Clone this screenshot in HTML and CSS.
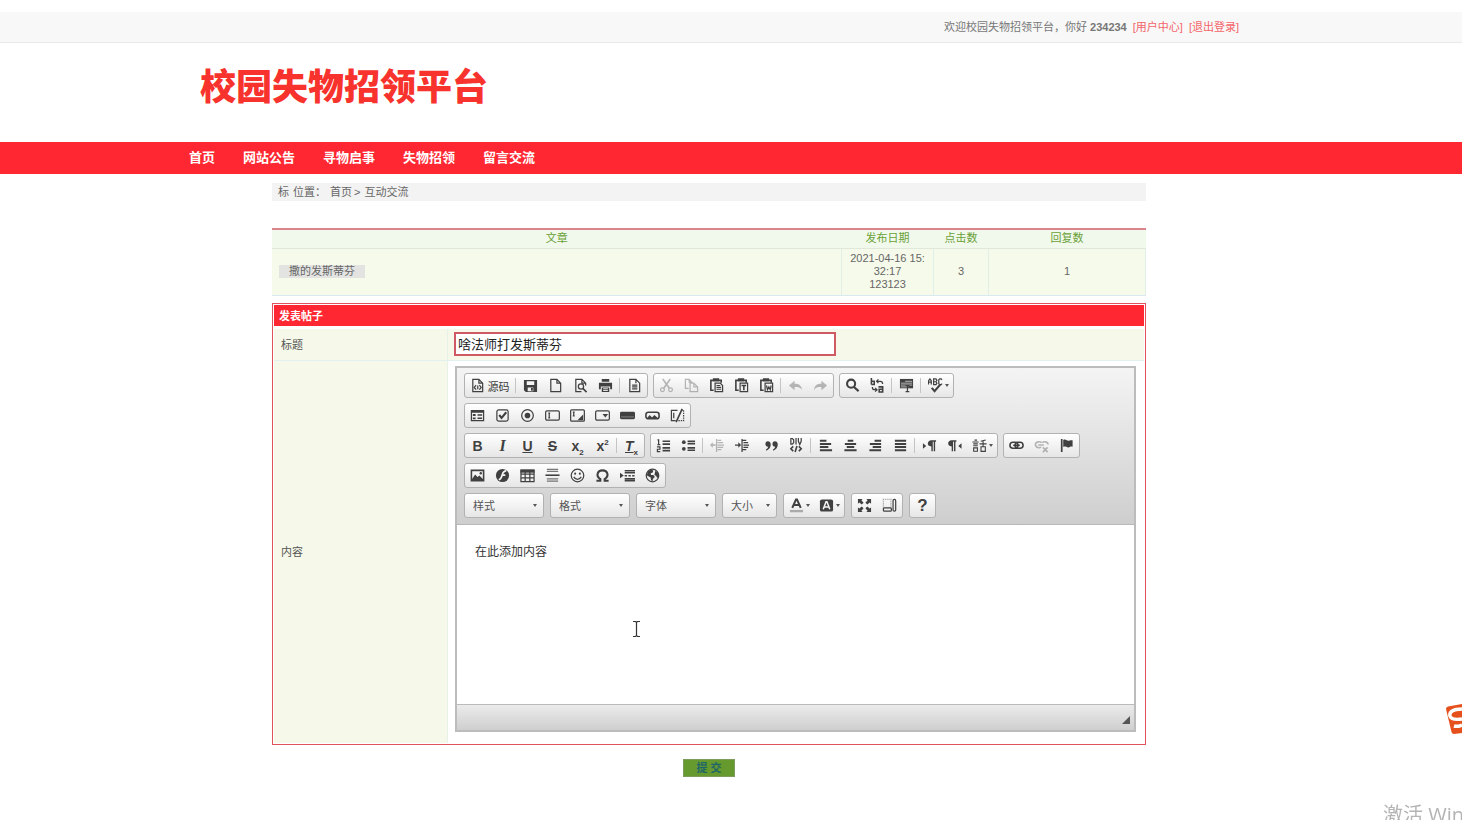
FILE: index.html
```html
<!DOCTYPE html>
<html lang="zh-CN">
<head>
<meta charset="utf-8">
<title>校园失物招领平台</title>
<link rel="stylesheet" href="styles.css">
</head>
<body>
<svg class="sprite" aria-hidden="true">
  <symbol id="i-source" viewBox="0 0 16 16"><path class="l" d="M3 1.500h6.500l4 4v9H3zM9.500 1.500v4h4"/><path class="l" d="M6.500 7.500l-2 2.500 2 2.500M10 7.500l2 2.500-2 2.500M8.300 8v4"/></symbol>
  <symbol id="i-save" viewBox="0 0 16 16"><path class="f" d="M1 2h14v13H3l-2-2zM4 3.500v4h8v-4zM5 10v4h6v-4z" fill-rule="evenodd"/><path class="f" d="M8.500 10.500h2v3h-2z"/></symbol>
  <symbol id="i-new" viewBox="0 0 16 16"><path class="l" d="M3 1.500h6.500l4 4v9H3zM9.500 1.500v4h4"/></symbol>
  <symbol id="i-preview" viewBox="0 0 16 16"><path class="l" d="M13.500 8V5.500l-4-4H3v13h6M9.500 1.500v4h4"/><circle class="l" cx="8.500" cy="9" r="2.800"/><path class="b" d="M10.500 11l4 4"/></symbol>
  <symbol id="i-print" viewBox="0 0 16 16"><path class="f" d="M4 1h8v3H4zM1 5h14v7h-2V9H3v3H1zM4 10h8v5H4z"/><path d="M5.500 11.500h5M5.500 13.300h5" stroke="#eee"/></symbol>
  <symbol id="i-template" viewBox="0 0 16 16"><path class="l" d="M3 1.500h6.500l4 4v9H3zM9.500 1.500v4"/><path class="l" d="M5.500 7.500h5.500M5.500 9.500h5.500M5.500 11.500h5.500"/></symbol>
  <symbol id="i-cut" viewBox="0 0 16 16"><path class="b" d="M4 1l7 10M12 1L5 11"/><circle class="l" cx="3.700" cy="12.500" r="2"/><circle class="l" cx="12.300" cy="12.500" r="2"/></symbol>
  <symbol id="i-copy" viewBox="0 0 16 16"><path class="l" d="M5 11H1.500V1.500h4l3 3V5M5.500 1.500v3h3M6.500 5.500h4l4 4v5h-8zM10.500 5.500v4h4"/></symbol>
  <symbol id="i-paste" viewBox="0 0 16 16"><path class="b" d="M5 13H2V2.500h11V5M5 3V1h5v2z"/><path class="l" d="M6.500 5.500h5.500l2.500 2.500v6.500h-8z"/><path class="l" d="M8 8h4M8 10h5M8 12h5"/></symbol>
  <symbol id="i-pastetext" viewBox="0 0 16 16"><path class="b" d="M5 13H2V2.500h11V5M5 3V1h5v2z"/><path class="l" d="M6.500 5.500h8v9h-8z"/><path class="b" d="M8 8h5M10.500 8v5"/></symbol>
  <symbol id="i-pasteword" viewBox="0 0 16 16"><path class="b" d="M5 13H2V2.500h11V5M5 3V1h5v2z"/><path class="l" d="M6.500 5.500h8v9h-8z"/><path class="l" d="M8 8l1 4.500 1.500-3 1.500 3L13 8"/></symbol>
  <symbol id="i-undo" viewBox="0 0 16 16"><path class="f" d="M1 8l6-5v3c5 0 7.500 2 8 7-1.500-3-4-3.500-8-3.500V13z"/></symbol>
  <symbol id="i-redo" viewBox="0 0 16 16"><path class="f" d="M15 8L9 3v3c-5 0-7.500 2-8 7 1.500-3 4-3.500 8-3.500V13z"/></symbol>
  <symbol id="i-find" viewBox="0 0 16 16"><circle cx="6.500" cy="6" r="4.300" class="h"/><path d="M9.500 9.500l5 4.500" class="h"/></symbol>
  <symbol id="i-replace" viewBox="0 0 16 16"><path class="b" d="M1.500 0v7M1.500 3.500h3V7h-3M9 9.500h4.500V15H9.800v-3h3.500"/><path class="l" d="M7 3.500h4c2 0 2.500 1 2.500 3M9 1.500l-2 2 2 2M7 12.500H5c-2 0-2.500-1-2.500-3M5.500 10.500l2 2-2 2"/></symbol>
  <symbol id="i-selectall" viewBox="0 0 16 16"><path class="f" d="M1 1h14v10H1z"/><path d="M6.500 3.500H14M2 5.500h12M2 7.500h12M2 9.500h8" stroke="#bbb"/><path class="l" d="M9 8v6.500M7 14.500h4M7 8h4"/></symbol>
  <symbol id="i-spell" viewBox="0 0 16 16"><path class="l" d="M.5 7V3l1.500-2L3.500 3v4M.5 4.500h3M6 1v6h2.500l1-1.500L8.500 4H6h2.500l1-1.500L8.500 1zM15 2l-1-1h-1.500L11.500 2v4l1 1h1.500l1-1"/><path class="h" d="M4 10.500l3 3.500 6-7"/></symbol>
  <symbol id="i-form" viewBox="0 0 16 16"><path class="l" d="M1.500 3h13v10.500h-13z"/><path class="f" d="M1 2h14v3H1zM3 6.500h3v2H3zM3 10h3v2H3z"/><path class="b" d="M8 7.500h5M8 11h5"/></symbol>
  <symbol id="i-check" viewBox="0 0 16 16"><rect class="l" x="2" y="2" width="12" height="12" rx="2"/><path class="h" d="M4.500 7.500L7 10.500 12 4.500"/></symbol>
  <symbol id="i-radio" viewBox="0 0 16 16"><circle class="l" cx="8" cy="8" r="6.200"/><circle class="f" cx="8" cy="8" r="3"/></symbol>
  <symbol id="i-field" viewBox="0 0 16 16"><rect class="l" x=".7" y="3" width="14.600" height="10" rx="1.500"/><path class="l" d="M3.500 5.500h2M4.500 5.500v5M3.500 10.500h2"/></symbol>
  <symbol id="i-area" viewBox="0 0 16 16"><rect class="l" x=".7" y="2" width="14.600" height="12" rx="1"/><path class="l" d="M3 4.500h2M4 4.500v4M3 8.500h2"/><path class="f" d="M14 7v6H8z"/></symbol>
  <symbol id="i-select" viewBox="0 0 16 16"><rect class="l" x=".7" y="3" width="14.600" height="10" rx="1.500"/><path class="f" d="M8 6.500h6L11 10z"/></symbol>
  <symbol id="i-button" viewBox="0 0 16 16"><rect class="f" x="0" y="4" width="16" height="8" rx="1.500"/><path d="M1 9.500h14" stroke="#888"/></symbol>
  <symbol id="i-imgbutton" viewBox="0 0 16 16"><rect class="b" x="1" y="4.500" width="14" height="7" rx="2.500"/><path class="f" d="M2 11l3-3.500 2.500 2.500L10 7.500l4 3.500z"/></symbol>
  <symbol id="i-hidden" viewBox="0 0 16 16"><path class="l" d="M8 2.500H1.500v11H6M4 5v6"/><path class="l" stroke-dasharray="1.500 1" d="M12 2.500h2.500v11H8"/><path class="b" d="M13 1L6.500 15"/></symbol>
  <symbol id="i-ol" viewBox="0 0 16 16"><path class="l" d="M1.500 2h1.300v5M1.500 7h3M1 9.500h3.200V12H1.500v2.500h3"/><path class="b" d="M7 3.500h8M7 6.500h8M7 10.500h8M7 13.500h8"/></symbol>
  <symbol id="i-ul" viewBox="0 0 16 16"><circle class="f" cx="3" cy="4.500" r="2"/><circle class="f" cx="3" cy="11.500" r="2"/><path class="b" d="M7 3.500h8M7 6h8M7 10.500h8M7 13h8"/></symbol>
  <symbol id="i-outdent" viewBox="0 0 16 16"><path class="l" d="M8 2.500h4M8 5h6M8 7.500h7M8 10h6M8 12.500h4M7 1v14"/><path class="b" d="M1 7.500h5"/><path class="f" d="M0 7.500l3-3v6z"/></symbol>
  <symbol id="i-indent" viewBox="0 0 16 16"><path class="l" d="M8 2.500h4M9 5h5M9 7.500h6M9 10h5M8 12.500h4M7.500 1v14M0 7.500h5"/><path class="f" d="M6.500 7.500l-3-3v6z"/></symbol>
  <symbol id="i-quote" viewBox="0 0 16 16"><path class="f" d="M4 3.500c2 0 3.200 1.300 3.200 3.500 0 3-1.700 5.300-4.700 6.500l-.5-1.200c1.500-.8 2.300-1.800 2.400-3C2.500 9.300 1.500 8 1.500 6.300 1.500 4.600 2.600 3.500 4 3.500zM11.500 3.500c2 0 3.200 1.300 3.200 3.500 0 3-1.700 5.300-4.700 6.500l-.5-1.200c1.500-.8 2.300-1.800 2.400-3-1.900 0-2.900-1.300-2.900-3 0-1.700 1.100-2.800 2.500-2.800z"/></symbol>
  <symbol id="i-div" viewBox="0 0 16 16"><path class="l" d="M2 .5v6h1.500L5 5V2L3.500.5zM7.500 0v7M10 0v3.500L11.500 7 13 3.500V0"/><path class="b" d="M4.500 9L2 11.500 4.500 14M10.500 9l2.500 2.500-2.500 2.500M8.500 8.500l-2 6.500"/></symbol>
  <symbol id="i-left" viewBox="0 0 16 16"><path class="h" d="M2 3h7M2 6.300h12M2 9.600h9M2 13h13"/></symbol>
  <symbol id="i-center" viewBox="0 0 16 16"><path class="h" d="M5 3h6M2 6.300h12M4 9.600h8M1.500 13h13"/></symbol>
  <symbol id="i-right" viewBox="0 0 16 16"><path class="h" d="M7 3h7M2 6.300h12M5 9.600h9M1.500 13h12.500"/></symbol>
  <symbol id="i-justify" viewBox="0 0 16 16"><path class="h" d="M2 3h12M2 6.300h12M2 9.600h12M2 13h12"/></symbol>
  <symbol id="i-ltr" viewBox="0 0 16 16"><path class="f" d="M1 5.500L4.500 8.500 1 11.500zM15 2.500v1.500h-1V14h-1.500V4h-1v10H10V9C4.500 9 5.500 2.500 10 2.500z"/></symbol>
  <symbol id="i-rtl" viewBox="0 0 16 16"><path class="f" d="M15.500 5.500L12 8.500l3.500 3zM10 2.500v1.500H9V14H7.500V4h-1v10H5V9C-.5 9 .5 2.500 5 2.500z"/></symbol>
  <symbol id="i-lang" viewBox="0 0 18 16"><path class="l" d="M3 1.500h3M.5 3.700h7.500M1.500 6h5.500M1.500 8.300h5.500M2 10.800h4.500v4H2zM16.500 1.500l-6 1.500M13.300 2.500V9M9 6h8.500M10.800 9.500h5.200V15h-5.200z"/></symbol>
  <symbol id="i-link" viewBox="0 0 16 16"><rect class="b" x="1" y="4.500" width="8.500" height="6.500" rx="3.200"/><rect class="b" x="6.500" y="4.500" width="8.500" height="6.500" rx="3.200"/><path class="b" d="M4.500 7.800h7"/></symbol>
  <symbol id="i-unlink" viewBox="0 0 16 16"><path class="b" d="M8 5c-1-1.500-6.500-1.500-6.500 2s5 4 6 2.500M4.500 7.500h6M9 5c1-1.500 6-1.500 6 2M9.500 10l5 5M14.500 10l-5 5"/></symbol>
  <symbol id="i-flag" viewBox="0 0 16 16"><path class="f" d="M2 1h1.800v14H2zM4.500 2c3-1.500 4 1.500 6 .8 1.500-.5 2.500-.5 4-.5v7c-3-.5-3 1-5 .7-2-.4-3-1.500-5-.5z"/></symbol>
  <symbol id="i-image" viewBox="0 0 16 16"><path class="b" d="M1.500 2.500h13v11h-13z"/><path class="f" d="M2 12l3.500-5L8 9.500l2-1.500 4 4v1H2z"/><circle class="f" cx="11.500" cy="5.500" r="1.300"/></symbol>
  <symbol id="i-flash" viewBox="0 0 16 16"><circle class="f" cx="8" cy="8" r="7"/><path d="M12 3C8.500 3 8 6 7.500 8S6 12 4 12.500M7 7.500h4" stroke="#f4f4f4" stroke-width="1.800" fill="none"/></symbol>
  <symbol id="i-table" viewBox="0 0 16 16"><path class="l" d="M1 2.500h14v12H1zM1 6.500h14M1 10.500h14M5.500 4v10M10.500 4v10"/><path class="f" d="M.5 1.500h15v3.500H.5z"/></symbol>
  <symbol id="i-hr" viewBox="0 0 16 16"><path class="l" opacity=".7" d="M2 1.500h12M2 3.700h12M2 11.500h12M2 14h12"/><path class="b" d="M.5 7.700h15"/></symbol>
  <symbol id="i-smile" viewBox="0 0 16 16"><circle class="l" cx="8" cy="8" r="6.700"/><circle class="f" cx="5.500" cy="6" r="1.100"/><circle class="f" cx="10.500" cy="6" r="1.100"/><path class="l" d="M4 9.500c2 3.500 6 3.500 8 0"/></symbol>
  <symbol id="i-omega" viewBox="0 0 16 16"><path class="h" d="M1.500 13.500h4.200v-1.700C.5 8.500 2.500 2.500 8 2.500s7.500 6 2.300 9.300v1.700h4.200"/></symbol>
  <symbol id="i-break" viewBox="0 0 16 16"><path class="f" d="M0 5l4 3-4 3z"/><path class="b" d="M5 3h11M5 5h11M5 11.500h11M5 13.500h11"/><path class="b" stroke-dasharray="2.500 1.500" d="M5 8.300h11"/></symbol>
  <symbol id="i-globe" viewBox="0 0 16 16"><circle class="l" cx="8" cy="8" r="6.700"/><path class="f" d="M3 3.500L7 1.500l2 1.500-1 2-2 .5.500 2H9l1.500 2-2 2-.5 2.500-1.500-1-.5-3L2 8zM11 3l2.500 1.500L15 8l-2 3-1-2.500-2-1z"/></symbol>
  <symbol id="i-color" viewBox="0 0 16 16"><path class="h" d="M3.500 10.500L7.500 1.500h1l4 9M5 7.500h6"/><path d="M1 14h14" stroke="#aaa" stroke-width="2.500"/></symbol>
  <symbol id="i-bgcolor" viewBox="0 0 16 16"><rect class="f" x="1" y="1.500" width="14" height="13" rx="2"/><path d="M4.500 12L7.500 4h1l3 8M6 9.500h4" stroke="#f4f4f4" stroke-width="1.600" fill="none"/></symbol>
  <symbol id="i-max" viewBox="0 0 16 16"><path class="f" d="M1 1h5L4.700 2.500 7 5 5 7 2.500 4.700 1 6zM15 1h-5l1.300 1.500L9 5l2 2 2.500-2.300L15 6zM1 15h5l-1.300-1.500L7 11 5 9l-2.500 2.300L1 10zM15 15h-5l1.300-1.500L9 11l2-2 2.500 2.300L15 10z"/></symbol>
  <symbol id="i-blocks" viewBox="0 0 16 16"><path class="l" opacity=".5" stroke-dasharray="1 1" d="M1.500 10V1.500h8V10"/><rect class="l" x="1.500" y="10.500" width="8.500" height="3.500" rx="1"/><rect class="l" x="11.800" y="1.500" width="2.800" height="12.500" rx="1.300"/></symbol>
</svg>

<div class="topbar">
  <div class="wrap topbar-in">
    <span>欢迎校园失物招领平台，你好 <b>234234</b></span>
    <a href="#">[用户中心]</a>
    <a href="#">[退出登录]</a>
  </div>
</div>
<header class="wrap brand"><h1>校园失物招领平台</h1></header>
<nav class="nav">
  <div class="wrap nav-in">
    <a href="#">首页</a><a href="#">网站公告</a><a href="#">寻物启事</a><a href="#">失物招领</a><a href="#">留言交流</a>
  </div>
</nav>
<div class="wrap">
<main class="main">
  <div class="crumbs"><span>标</span><span>位置：</span><a href="#">首页</a><span>&gt;</span><a class="here" href="#">互动交流</a></div>

  <table class="posts">
    <colgroup><col><col class="c-date"><col class="c-hits"><col class="c-replies"></colgroup>
    <thead><tr><th>文章</th><th>发布日期</th><th>点击数</th><th>回复数</th></tr></thead>
    <tbody><tr><td class="topic"><a href="#">撒的发斯蒂芬</a></td><td>2021-04-16 15:<br>32:17<br>123123</td><td>3</td><td>1</td></tr></tbody>
  </table>

  <form>
    <div class="post">
      <h2>发表帖子</h2>
      <div class="row">
        <label for="title">标题</label>
        <div class="cell cell-title"><input id="title" type="text" value="啥法师打发斯蒂芬"></div>
      </div>
      <div class="row">
        <label for="content">内容</label>
        <div class="cell">
          <div class="editor">
            <div class="toolbar">
              <div class="line">
                <div class="group">
                  <button type="button" class="wide"><svg><use href="#i-source"/></svg>源码</button><i></i>
                  <button type="button" aria-label="保存"><svg><use href="#i-save"/></svg></button>
                  <button type="button" aria-label="新建"><svg><use href="#i-new"/></svg></button>
                  <button type="button" aria-label="预览"><svg><use href="#i-preview"/></svg></button>
                  <button type="button" aria-label="打印"><svg><use href="#i-print"/></svg></button><i></i>
                  <button type="button" aria-label="模板"><svg><use href="#i-template"/></svg></button>
                </div>
                <div class="group">
                  <button type="button" disabled aria-label="剪切"><svg><use href="#i-cut"/></svg></button>
                  <button type="button" disabled aria-label="复制"><svg><use href="#i-copy"/></svg></button>
                  <button type="button" aria-label="粘贴"><svg><use href="#i-paste"/></svg></button>
                  <button type="button" aria-label="粘贴为文本"><svg><use href="#i-pastetext"/></svg></button>
                  <button type="button" aria-label="从 Word 粘贴"><svg><use href="#i-pasteword"/></svg></button><i></i>
                  <button type="button" disabled aria-label="撤销"><svg><use href="#i-undo"/></svg></button>
                  <button type="button" disabled aria-label="重做"><svg><use href="#i-redo"/></svg></button>
                </div>
                <div class="group">
                  <button type="button" aria-label="查找"><svg><use href="#i-find"/></svg></button>
                  <button type="button" aria-label="替换"><svg><use href="#i-replace"/></svg></button><i></i>
                  <button type="button" aria-label="全选"><svg><use href="#i-selectall"/></svg></button><i></i>
                  <button type="button" class="drop" aria-label="拼写检查"><svg><use href="#i-spell"/></svg></button>
                </div>
              </div>
              <div class="line">
                <div class="group">
                  <button type="button" aria-label="表单"><svg><use href="#i-form"/></svg></button>
                  <button type="button" aria-label="复选框"><svg><use href="#i-check"/></svg></button>
                  <button type="button" aria-label="单选按钮"><svg><use href="#i-radio"/></svg></button>
                  <button type="button" aria-label="单行文本"><svg><use href="#i-field"/></svg></button>
                  <button type="button" aria-label="多行文本"><svg><use href="#i-area"/></svg></button>
                  <button type="button" aria-label="列表"><svg><use href="#i-select"/></svg></button>
                  <button type="button" aria-label="按钮"><svg><use href="#i-button"/></svg></button>
                  <button type="button" aria-label="图像按钮"><svg><use href="#i-imgbutton"/></svg></button>
                  <button type="button" aria-label="隐藏域"><svg><use href="#i-hidden"/></svg></button>
                </div>
              </div>
              <div class="line">
                <div class="group letters">
                  <button type="button"><b>B</b></button>
                  <button type="button"><em class="serif">I</em></button>
                  <button type="button"><u>U</u></button>
                  <button type="button"><s>S</s></button>
                  <button type="button"><span>x<sub>2</sub></span></button>
                  <button type="button"><span>x<sup>2</sup></span></button><i></i>
                  <button type="button"><span><em><u>T</u></em><sub>x</sub></span></button>
                </div>
                <div class="group">
                  <button type="button" aria-label="编号列表"><svg><use href="#i-ol"/></svg></button>
                  <button type="button" aria-label="项目列表"><svg><use href="#i-ul"/></svg></button><i></i>
                  <button type="button" disabled aria-label="减少缩进"><svg><use href="#i-outdent"/></svg></button>
                  <button type="button" aria-label="增加缩进"><svg><use href="#i-indent"/></svg></button><i class="blank"></i>
                  <button type="button" aria-label="块引用"><svg><use href="#i-quote"/></svg></button>
                  <button type="button" aria-label="DIV 容器"><svg><use href="#i-div"/></svg></button><i></i>
                  <button type="button" aria-label="左对齐"><svg><use href="#i-left"/></svg></button>
                  <button type="button" aria-label="居中"><svg><use href="#i-center"/></svg></button>
                  <button type="button" aria-label="右对齐"><svg><use href="#i-right"/></svg></button>
                  <button type="button" aria-label="两端对齐"><svg><use href="#i-justify"/></svg></button><i></i>
                  <button type="button" aria-label="从左到右"><svg><use href="#i-ltr"/></svg></button>
                  <button type="button" aria-label="从右到左"><svg><use href="#i-rtl"/></svg></button>
                  <button type="button" class="drop" aria-label="语言"><svg><use href="#i-lang"/></svg></button>
                </div>
                <div class="group">
                  <button type="button" aria-label="链接"><svg><use href="#i-link"/></svg></button>
                  <button type="button" disabled aria-label="取消链接"><svg><use href="#i-unlink"/></svg></button>
                  <button type="button" aria-label="锚点"><svg><use href="#i-flag"/></svg></button>
                </div>
              </div>
              <div class="line">
                <div class="group">
                  <button type="button" aria-label="图像"><svg><use href="#i-image"/></svg></button>
                  <button type="button" aria-label="Flash"><svg><use href="#i-flash"/></svg></button>
                  <button type="button" aria-label="表格"><svg><use href="#i-table"/></svg></button>
                  <button type="button" aria-label="水平线"><svg><use href="#i-hr"/></svg></button>
                  <button type="button" aria-label="表情"><svg><use href="#i-smile"/></svg></button>
                  <button type="button" aria-label="特殊符号"><svg><use href="#i-omega"/></svg></button>
                  <button type="button" aria-label="分页符"><svg><use href="#i-break"/></svg></button>
                  <button type="button" aria-label="IFrame"><svg><use href="#i-globe"/></svg></button>
                </div>
              </div>
              <div class="line line-combos">
                <div class="group combo"><select aria-label="样式"><option>样式</option></select></div>
                <div class="group combo"><select aria-label="格式"><option>格式</option></select></div>
                <div class="group combo"><select aria-label="字体"><option>字体</option></select></div>
                <div class="group combo combo-s"><select aria-label="大小"><option>大小</option></select></div>
                <div class="group">
                  <button type="button" class="drop" aria-label="文本颜色"><svg><use href="#i-color"/></svg></button>
                  <button type="button" class="drop" aria-label="背景颜色"><svg><use href="#i-bgcolor"/></svg></button>
                </div>
                <div class="group">
                  <button type="button" aria-label="全屏"><svg><use href="#i-max"/></svg></button>
                  <button type="button" aria-label="显示区块"><svg><use href="#i-blocks"/></svg></button>
                </div>
                <div class="group letters"><button type="button" class="help"><b>?</b></button></div>
              </div>
            </div>
            <textarea id="content">在此添加内容</textarea>
            <div class="foot"><span class="grip"></span></div>
            <svg class="ibeam" viewBox="0 0 9 18" aria-hidden="true"><path d="M1 1.500h2.500l1 1 1-1H8M4.500 2v14M1 16.500h2.500l1-1 1 1H8" fill="none" stroke="#333" stroke-width="1.200"/></svg>
          </div>
        </div>
      </div>
    </div>
    <div class="actions"><button type="submit" class="submit">提 交</button></div>
  </form>
</main>
</div>

<svg class="ime" viewBox="0 0 16 30" aria-hidden="true"><path d="M0 5q0-2 2-2.500L16 0v29L8 30q-2 0-2.500-2z" fill="#e5501c"/><path d="M16 5C7 5 3 8 4 12c1 3 5 4 12 3M8 22q3 1 8-1" fill="none" stroke="#fff" stroke-width="3.500"/><path d="M11 11q1-2 5-2" fill="none" stroke="#e5501c" stroke-width="2"/></svg>
<div class="activate">激活 Windows</div>
</body>
</html>
```
FILE: styles.css
```css
* { box-sizing: border-box; }
body {
  margin: 0;
  padding-top: 12px;
  min-height: 100vh;
  overflow: hidden;
  background: #fefffe;
  color: #666;
  font: 11px/16px "Liberation Sans", "Noto Sans CJK SC", sans-serif;
}
a { color: inherit; text-decoration: none; }
button, input, select, textarea { font-family: inherit; }
.sprite { position: absolute; width: 0; height: 0; }
.wrap { max-width: 1084px; margin: 0 auto; }

.topbar { background: #f7f8f7; border-bottom: 1px solid #e9eaea; }
.topbar-in { display: flex; justify-content: flex-end; gap: 6px; padding: 7px 34px 7px 0; color: #777; }
.topbar-in a { color: #f4646a; }

.brand { padding: 19px 11px 28px; }
.brand h1 {
  margin: 0;
  font-size: 36px;
  line-height: 52px;
  font-weight: 900;
  color: #f8322c;
}

.nav { background: #ff2832; }
.nav-in { display: flex; gap: 28px; }
.nav a { color: #fff; font-size: 13px; line-height: 32px; font-weight: bold; }

.main { margin: 9px 127px 0 83px; }
.crumbs { display: flex; gap: 4px; padding: 1px 6px; background: #f3f3f3; }
.crumbs a + span { margin-left: -2px; }

.posts {
  width: 100%;
  margin-top: 27px;
  table-layout: fixed;
  border-collapse: collapse;
  border-top: 2px solid #dc848c;
}
.c-date { width: 92px; }
.c-hits { width: 55px; }
.c-replies { width: 157px; }
.posts th { padding: 0 0 2px; background: #f1f8ec; color: #6aa136; font-weight: normal; border-bottom: 1px solid #e0e8dc; }
.posts td {
  padding: 3px 0 4px;
  line-height: 13px;
  text-align: center;
  background: #f6faea;
  border-right: 1px solid #e1efe9;
  border-bottom: 1px solid #d8eaf0;
}
.posts .topic { padding-left: 7px; text-align: left; }
.topic a { display: inline-block; padding: 0 10px; background: #e3e4e2; }

.post { margin-top: 7px; padding: 1px; border: 1px solid #e0525c; background: #fff; }
.post h2 { margin: 0 0 3px; padding: 3px 5px 2px; background: #ff2832; color: #fff; font-size: 11px; line-height: 16px; }
.row { display: flex; border-bottom: 1px solid #e2f1f0; }
.row:last-child { border-bottom: 0; }
.row label { flex: 0 0 174px; display: flex; align-items: center; padding-left: 7px; background: #f6f9ea; border-right: 1px solid #e6f1e8; color: #555; }
.cell { flex: 1; min-width: 0; padding: 5px 8px 11px 7px; }
.cell-title { padding: 3px 6px 4px; background: #f6f9ea; }
.cell input { display: block; width: 382px; max-width: 100%; height: 24px; padding: 0 2px 2px; border: 2px solid #cf5a64; background: #fff; color: #222; font-size: 13px; outline: 0; }

.editor { position: relative; border: 2px solid #bcbcbc; }
.toolbar { display: grid; gap: 5px; padding: 5px 7px 6px; background: linear-gradient(#f4f4f4, #cecece); border-bottom: 1px solid #b8b8b8; }
.line { display: flex; flex-wrap: wrap; gap: 5px; }
.line-combos { gap: 6px; }
.group { display: flex; height: 25px; border: 1px solid #b2b2b2; border-radius: 3px; background: linear-gradient(#fff, #e6e6e6); }
.group > i { width: 2px; margin: 4px 1px; border-left: 1px solid #c4c4c4; }
.group > i.blank { border-color: transparent; }
.group button { display: flex; align-items: center; justify-content: center; width: 25px; padding: 0; border: 0; background: none; color: #404040; font-size: 11px; }
.group .wide { width: 49px; gap: 3px; }
.group .drop { width: 30px; gap: 2px; }
.drop::after, .combo::after { content: ""; border: 2px solid transparent; border-top: 3px solid #555; border-bottom: 0; }
.group svg { width: 15px; height: 15px; flex: none; }
.group button:disabled { opacity: .35; }
.f { fill: #404040; }
.l, .b, .h { fill: none; stroke: #404040; stroke-width: 1.300; }
.b { stroke-width: 1.700; }
.h { stroke-width: 2.200; }
.letters button { font-size: 14px; font-weight: bold; }
.letters .serif { font-family: "Liberation Serif", serif; font-size: 16px; }
.letters sub, .letters sup { font-size: 8px; line-height: 0; }
.letters .help { font-size: 17px; }
.combo { width: 80px; align-items: center; padding-right: 6px; }
.combo-s { width: 55px; }
.combo select { flex: 1; min-width: 0; height: 23px; padding: 0 0 0 8px; appearance: none; border: 0; background: none; color: #555; font-size: 11px; }
.editor textarea { display: block; width: 100%; height: 179px; padding: 18px; border: 0; background: #fff; color: #333; font-size: 12px; line-height: 18px; resize: none; outline: 0; }
.foot { display: flex; justify-content: flex-end; align-items: center; height: 26px; padding: 5px 4px 0 0; border-top: 1px solid #bbb; background: linear-gradient(#ebebeb, #cfcfcf); }
.grip { border-left: 8px solid transparent; border-bottom: 8px solid #555; }
.ibeam { position: absolute; left: 175px; top: 252px; width: 9px; height: 18px; }

.actions { display: flex; justify-content: center; padding-top: 14px; }
.submit { width: 52px; height: 18px; padding: 0; border: 1px solid #7d9c5c; background: #66992e; color: #1f6668; font-size: 11px; font-weight: bold; line-height: 16px; }

.ime { position: fixed; right: 0; top: 704px; width: 16px; height: 30px; }
.activate { position: fixed; right: 0; top: 802px; width: 79px; overflow: hidden; white-space: nowrap; color: #b4b4b4; font: 20px/26px "Open Sans", "Noto Sans CJK SC", sans-serif; }
```
